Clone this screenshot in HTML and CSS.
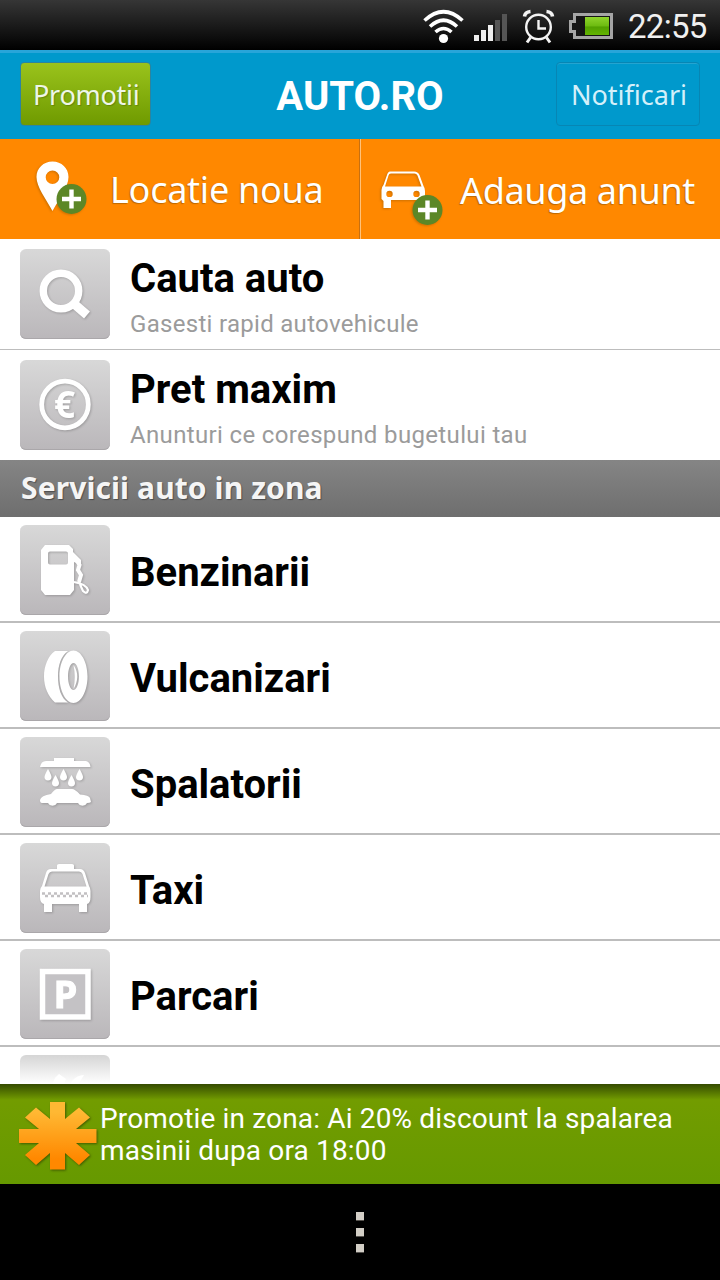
FILE: index.html
```
<!DOCTYPE html>
<html lang="ro">
<head>
    <meta charset="UTF-8">
    <meta name="viewport" content="width=device-width, initial-scale=1.0">
    <title>AUTO.RO</title>
    <link rel="stylesheet" href="styles.css">
</head>
<body>
    <div class="status-bar">
        <svg class="status-icons" width="220" height="50" viewBox="400 0 220 50">
            <defs>
                <linearGradient id="battery" x1="0" y1="0" x2="0" y2="1">
                    <stop offset="0" stop-color="#8fd42c"/>
                    <stop offset="0.5" stop-color="#6dbb10"/>
                    <stop offset="0.55" stop-color="#52a000"/>
                    <stop offset="1" stop-color="#62b400"/>
                </linearGradient>
            </defs>
            <!-- wifi -->
            <g fill="none" stroke="#fff" stroke-width="3.6">
                <path d="M424.500 20.500Q443.500 3 462.500 20.500"/>
                <path d="M430 26.500Q443.500 14 457 26.500"/>
                <path d="M435.500 32Q443.500 25 451.500 32"/>
            </g>
            <circle cx="443.500" cy="38.500" r="4.600" fill="#fff"/>
            <!-- signal -->
            <g fill="#eee">
                <rect x="474" y="35" width="5" height="6"/>
                <rect x="481" y="30" width="5" height="11"/>
                <rect x="488" y="25" width="5" height="16"/>
                <rect x="495" y="20" width="5" height="21" fill="#555"/>
                <rect x="502" y="14" width="5" height="27" fill="#555"/>
            </g>
            <!-- alarm -->
            <g fill="none" stroke="#f4f4f4" stroke-width="2.400">
                <circle cx="538.500" cy="27" r="12.300"/>
                <path d="M538.500 20V28.500H546"/>
                <path d="M530.500 37.500L527 42.500M546.500 37.500L550 42.500" stroke-width="3"/>
                <path d="M524.500 16.500Q525 12 530.500 11.500M552.500 16.500Q552 12 546.500 11.500" stroke-width="3.600"/>
            </g>
            <!-- battery -->
            <path d="M573 13H613V39H573V33H569V20H573Z" fill="#a5a5a5"/>
            <path d="M576 16H610V36H576V30H572V23H576Z" fill="#151515"/>
            <rect x="585" y="17" width="24" height="18" fill="url(#battery)"/>
        </svg>
        <span class="clock">22:55</span>
    </div>

    <div class="header">
        <a class="btn btn-promo">Promotii</a>
        <h1>AUTO.RO</h1>
        <a class="btn btn-notif">Notificari</a>
    </div>

    <div class="actions">
        <a class="action">
            <svg class="pin" width="52" height="56" viewBox="36 160 52 56">
                <path fill="#fff" fill-rule="evenodd" d="M52.500 161.500C43.500 161.500 36.500 168 36.500 177C36.500 187 46 199 52.500 211C59 199 68.500 187 68.500 177C68.500 168 61.500 161.500 52.500 161.500ZM52.500 170.500A6.800 6.800 0 1 1 52.500 184.100A6.800 6.800 0 1 1 52.500 170.500Z"/>
                <circle cx="71.500" cy="199" r="15" fill="#5c8727"/>
                <path d="M71.500 189.500V208.500M62 199H81" stroke="#fff" stroke-width="4.400"/>
            </svg>
            <span class="action-new">Locatie noua</span>
        </a>
        <a class="action">
            <svg class="car" width="64" height="56" viewBox="380 170 64 56">
                <path fill="#fff" fill-rule="evenodd" d="M390 171.500H414Q418 171.500 419.500 175L423.500 186Q425 188 425 191V200H391V208H383.500V201L381.500 199V190Q381.500 187 383.500 185L387 175Q388 171.500 390 171.500ZM391 173.500Q389 173.500 388.500 175.500L385 186.500H421.500L417.500 175.500Q416.500 173.500 414.500 173.500ZM389.500 190.700A3.200 3.200 0 1 0 389.500 197.100A3.200 3.200 0 1 0 389.500 190.700ZM416.500 190.700A3.200 3.200 0 1 0 416.500 197.100A3.200 3.200 0 1 0 416.500 190.700Z"/>
                <circle cx="427.500" cy="210" r="15" fill="#5c8727"/>
                <path d="M427.500 200.500V219.500M418 210H437" stroke="#fff" stroke-width="4.400"/>
            </svg>
            <span class="action-ad">Adauga anunt</span>
        </a>
    </div>

    <div class="list">
        <div class="item item-tall">
            <div class="tile">
                <svg width="90" height="90" viewBox="0 0 90 90">
                    <circle cx="41" cy="42" r="17.700" fill="none" stroke="#fff" stroke-width="7.400"/>
                    <path d="M52.500 53.500L67 66" stroke="#fff" stroke-width="9"/>
                </svg>
            </div>
            <div class="text">
                <h2>Cauta auto</h2>
                <p class="sub-search">Gasesti rapid autovehicule</p>
            </div>
        </div>
        <div class="item item-tall">
            <div class="tile">
                <svg width="90" height="90" viewBox="0 0 90 90">
                    <circle cx="45" cy="44.500" r="23.300" fill="none" stroke="#fff" stroke-width="4.800"/>
                    <text x="44.500" y="58" class="euro">€</text>
                </svg>
            </div>
            <div class="text">
                <h2>Pret maxim</h2>
                <p class="sub-price">Anunturi ce corespund bugetului tau</p>
            </div>
        </div>
    </div>

    <div class="section-title"><span>Servicii auto in zona</span></div>

    <div class="list services">
        <div class="item">
            <div class="tile">
                <svg width="90" height="90" viewBox="0 0 90 90">
                    <path fill="#fff" fill-rule="evenodd" d="M25 20H49L53 24V27L61 35V40L54 37V65L50 70H25L21 65V25ZM30 26.500Q28 26.500 28 28.500V37.500Q28 39.500 30 39.500H46Q48 39.500 48 37.500V28.500Q48 26.500 46 26.500Z"/>
                    <path d="M57 36L59.500 40L58 45L61 50L59 57" fill="none" stroke="#fff" stroke-width="4"/>
                    <path d="M54 57Q66 59 68 65Q67 70 63 66Q60 60 59 56" fill="none" stroke="#fff" stroke-width="2.200"/>
                </svg>
            </div>
            <h2>Benzinarii</h2>
        </div>
        <div class="item">
            <div class="tile">
                <svg width="90" height="90" viewBox="0 0 90 90">
                    <path fill="#fff" d="M35 20H48C41 25 38 34 38 45.500C38 57 41 67 48 71.500H35C28 65 24 56 24 45.500C24 35 28 25 35 20Z"/>
                    <path fill="#fff" fill-rule="evenodd" d="M53.500 19.500C61 19.500 67.500 31 67.500 45.500C67.500 60 61 72 53.500 72C46 72 39.500 60 39.500 45.500C39.500 31 46 19.500 53.500 19.500ZM53.500 32C50.500 32 48 38 48 45.500C48 53 50.500 59 53.500 59C56.500 59 59 53 59 45.500C59 38 56.500 32 53.500 32Z"/>
                    <path fill="#fff" d="M53.500 34Q61 45 53.500 58Q56 46 53.500 34Z"/>
                </svg>
            </div>
            <h2>Vulcanizari</h2>
        </div>
        <div class="item">
            <div class="tile">
                <svg width="90" height="90" viewBox="0 0 90 90">
                    <g fill="#fff">
                        <path d="M34 21H54V24H66Q70 25 70.500 30H20Q21 24 26 24H34Z"/>
                        <path id="drop" d="M28 32Q31.500 38 31.500 40A3.500 3.500 0 0 1 24.500 40Q24.500 38 28 32Z"/>
                        <use href="#drop" x="15.500"/>
                        <use href="#drop" x="31.500"/>
                        <use href="#drop" x="7.500" y="6"/>
                        <use href="#drop" x="23.500" y="6"/>
                        <path d="M37 52H52Q55 52 60 57.500Q69 58 70 61L71 65Q70 66 67 66A5 5 0 0 1 58 66H37A5 5 0 0 1 28 66H22Q20 66 20 63Q21 58.500 31 57Q35 52 37 52Z"/>
                    </g>
                </svg>
            </div>
            <h2>Spalatorii</h2>
        </div>
        <div class="item">
            <div class="tile">
                <svg width="90" height="90" viewBox="0 0 90 90">
                    <path fill="#fff" fill-rule="evenodd" d="M37 22.500Q37 21 39 21H52Q54 21 54 22.500V26H60Q63.500 26 65 30L69 43Q70.500 45 70.500 48V54Q70.500 60 67 61V69H59V61H32V69H24V61Q20 60 20 54V48Q20 45 22 43L26 30Q27 26 31 26H37ZM32 28.500Q29.500 28.500 28.500 31L24.500 43.500H66.500L62.500 31Q61.500 28.500 59 28.500Z"/>
                    <path d="M22 50.500H69" stroke="#c2c0c2" stroke-width="2.500" stroke-dasharray="3 3"/>
                    <path d="M25 53H68" stroke="#c2c0c2" stroke-width="2.500" stroke-dasharray="3 3"/>
                </svg>
            </div>
            <h2>Taxi</h2>
        </div>
        <div class="item">
            <div class="tile">
                <svg width="90" height="90" viewBox="0 0 90 90">
                    <rect x="22.500" y="22.500" width="45.500" height="45.500" fill="#c4c2c5" stroke="#fff" stroke-width="5.500"/>
                    <text x="33.500" y="58.500" class="parking">P</text>
                </svg>
            </div>
            <h2>Parcari</h2>
        </div>
        <div class="item">
            <div class="tile">
                <svg width="90" height="90" viewBox="0 0 90 90">
                    <path fill="#fff" d="M35 23L39 19L46 24L44 30H32ZM52 26Q57 20 64 20L58 30H50Z"/>
                </svg>
            </div>
        </div>
    </div>

    <div class="promo">
        <svg class="star" width="82" height="72" viewBox="18 1100 82 72">
            <defs>
                <linearGradient id="orange" gradientUnits="userSpaceOnUse" x1="0" y1="1102" x2="0" y2="1169">
                    <stop offset="0.150" stop-color="#ffb833"/>
                    <stop offset="0.850" stop-color="#ff8800"/>
                </linearGradient>
            </defs>
            <path fill="url(#orange)" d="M50 1102H65V1119L79 1107.500L90 1117.500L76 1129H96.500V1143H76L90 1155L79 1165L65 1153V1169.500H50V1153L36 1165L25 1155L39 1143H19V1129H39L25 1117.500L36 1107.500L50 1119Z"/>
        </svg>
        <p>Promotie in zona: Ai 20% discount la spalarea<br>masinii dupa ora 18:00</p>
    </div>

    <div class="nav-bar">
        <span class="dot"></span>
        <span class="dot"></span>
        <span class="dot"></span>
    </div>
</body>
</html>
```
FILE: styles.css
```
body {
    margin: 0;
    width: 720px;
    height: 1280px;
    display: flex;
    flex-direction: column;
    overflow: hidden;
    background: #fff;
    font-family: Roboto, sans-serif;
}
h1, h2, p {
    margin: 0;
    white-space: nowrap;
}
svg {
    display: block;
    flex: none;
}
.status-bar {
    height: 50px;
    flex: none;
    display: flex;
    justify-content: flex-end;
    background: linear-gradient(#363636, #000);
}
.clock {
    width: 92px;
    margin-left: 8px;
    line-height: 53px;
    font-size: 33px;
    letter-spacing: -0.7px;
    color: #f0f0f0;
}
.header {
    height: 89px;
    flex: none;
    box-sizing: border-box;
    padding: 9px 20px 13px;
    border-top: 3px solid #28a5d9;
    display: flex;
    justify-content: space-between;
    background: #0099cc;
}
h1 {
    margin-left: 13px;
    line-height: 70px;
    font-size: 40px;
    font-weight: 700;
    color: #fff;
}
.btn {
    box-sizing: border-box;
    height: 64px;
    border-radius: 4px;
    line-height: 63px;
    font-family: "Noto Sans", sans-serif;
    font-size: 27px;
    color: #eef6e8;
    white-space: nowrap;
}
.btn-promo {
    width: 131px;
    padding-left: 12px;
    border: 1px solid #2b84a0;
    letter-spacing: -0.25px;
    background: linear-gradient(#9ac31c, #6f9a00);
    text-shadow: 1px 1px 1px rgba(0, 0, 0, 0.2);
}
.btn-notif {
    width: 144px;
    padding-left: 14px;
    border: 1px solid #0786b4;
    box-shadow: inset 0 1px 0 #25a4d0;
    color: #d4f0fa;
}
.actions {
    height: 100px;
    flex: none;
    display: flex;
    background: #ff8800;
}
.action {
    width: 360px;
    box-sizing: border-box;
    display: flex;
    font-family: "Noto Sans", sans-serif;
    font-size: 36px;
    color: #fff;
    text-shadow: -1px 1px 1px rgba(90, 60, 0, 0.4);
    white-space: nowrap;
}
.action:first-child {
    border-right: 1px solid #c87010;
}
.action:last-child {
    border-left: 1px solid #ffc27a;
}
.pin {
    margin: 21px 22px 0 36px;
    filter: drop-shadow(-1px 1px 1px rgba(90, 60, 0, 0.3));
}
.car {
    margin: 31px 16px 0 19px;
    filter: drop-shadow(-1px 1px 1px rgba(90, 60, 0, 0.3));
}
.action span {
    line-height: 102px;
}
.action-new {
    letter-spacing: -0.25px;
}
.action-ad {
    padding-top: 1px;
    letter-spacing: -0.35px;
}
.list {
    flex: none;
}
.item {
    height: 106px;
    box-sizing: border-box;
    padding: 8px 20px 0;
    display: flex;
    gap: 20px;
    border-bottom: 2px solid #bdbdbd;
}
.item-tall {
    height: 111px;
    padding-top: 10px;
    border-bottom-width: 1px;
}
.item-tall:last-child {
    height: 110px;
    border-bottom: none;
}
.tile {
    width: 90px;
    height: 90px;
    flex: none;
    border-radius: 6px;
    background: linear-gradient(#d8d8d8, #bab7ba);
    box-shadow: inset 0 -1px 0 #aaa7aa;
}
.tile svg {
    filter: drop-shadow(1px 1px 1px rgba(0, 0, 0, 0.2));
}
h2 {
    font-size: 40px;
    font-weight: 700;
    line-height: 96px;
    color: #000;
}
.item-tall h2 {
    line-height: 60px;
}
.item-tall p {
    line-height: 30px;
    font-size: 24px;
    color: #9b9b9b;
}
.sub-search {
    letter-spacing: 0.3px;
}
.sub-price {
    letter-spacing: 0.35px;
}
.euro {
    font: 700 37px "Open Sans", sans-serif;
    text-anchor: middle;
    fill: #fff;
}
.parking {
    font: 700 38px "Open Sans", sans-serif;
    fill: #fff;
    stroke: #fff;
    stroke-width: 1px;
}
.section-title {
    height: 57px;
    flex: none;
    padding-left: 21px;
    background: linear-gradient(#858585, #6e6e6e);
    font-family: "Noto Sans", sans-serif;
    font-size: 30px;
    font-weight: 700;
    line-height: 56px;
    letter-spacing: 0.1px;
    color: #f5f5f5;
    text-shadow: 1px 1px 1px rgba(0, 0, 0, 0.35);
}
/* the last row fades out under the promo banner */
.services {
    height: 567px;
    overflow: hidden;
}
.services .item:last-child .tile {
    background: linear-gradient(#d5d5d5, #fff 29px);
    box-shadow: none;
}
.services .item:last-child svg {
    filter: none;
}
.promo {
    height: 100px;
    flex: none;
    display: flex;
    background: linear-gradient(#354b00, #729c00 16px, #669900);
}
.star {
    margin: 16px 0 0 18px;
    filter: drop-shadow(1px 1px 1px rgba(40, 50, 0, 0.6));
}
.promo p {
    padding-top: 19px;
    font-size: 28px;
    line-height: 32px;
    letter-spacing: 0.16px;
    color: #fff;
}
.nav-bar {
    flex: 1;
    padding-top: 28px;
    display: flex;
    flex-direction: column;
    align-items: center;
    gap: 8px;
    background: #000;
}
.dot {
    width: 8px;
    height: 8px;
    background: #d2cec6;
    box-shadow: 0 1px 0 #55524e;
}
```
